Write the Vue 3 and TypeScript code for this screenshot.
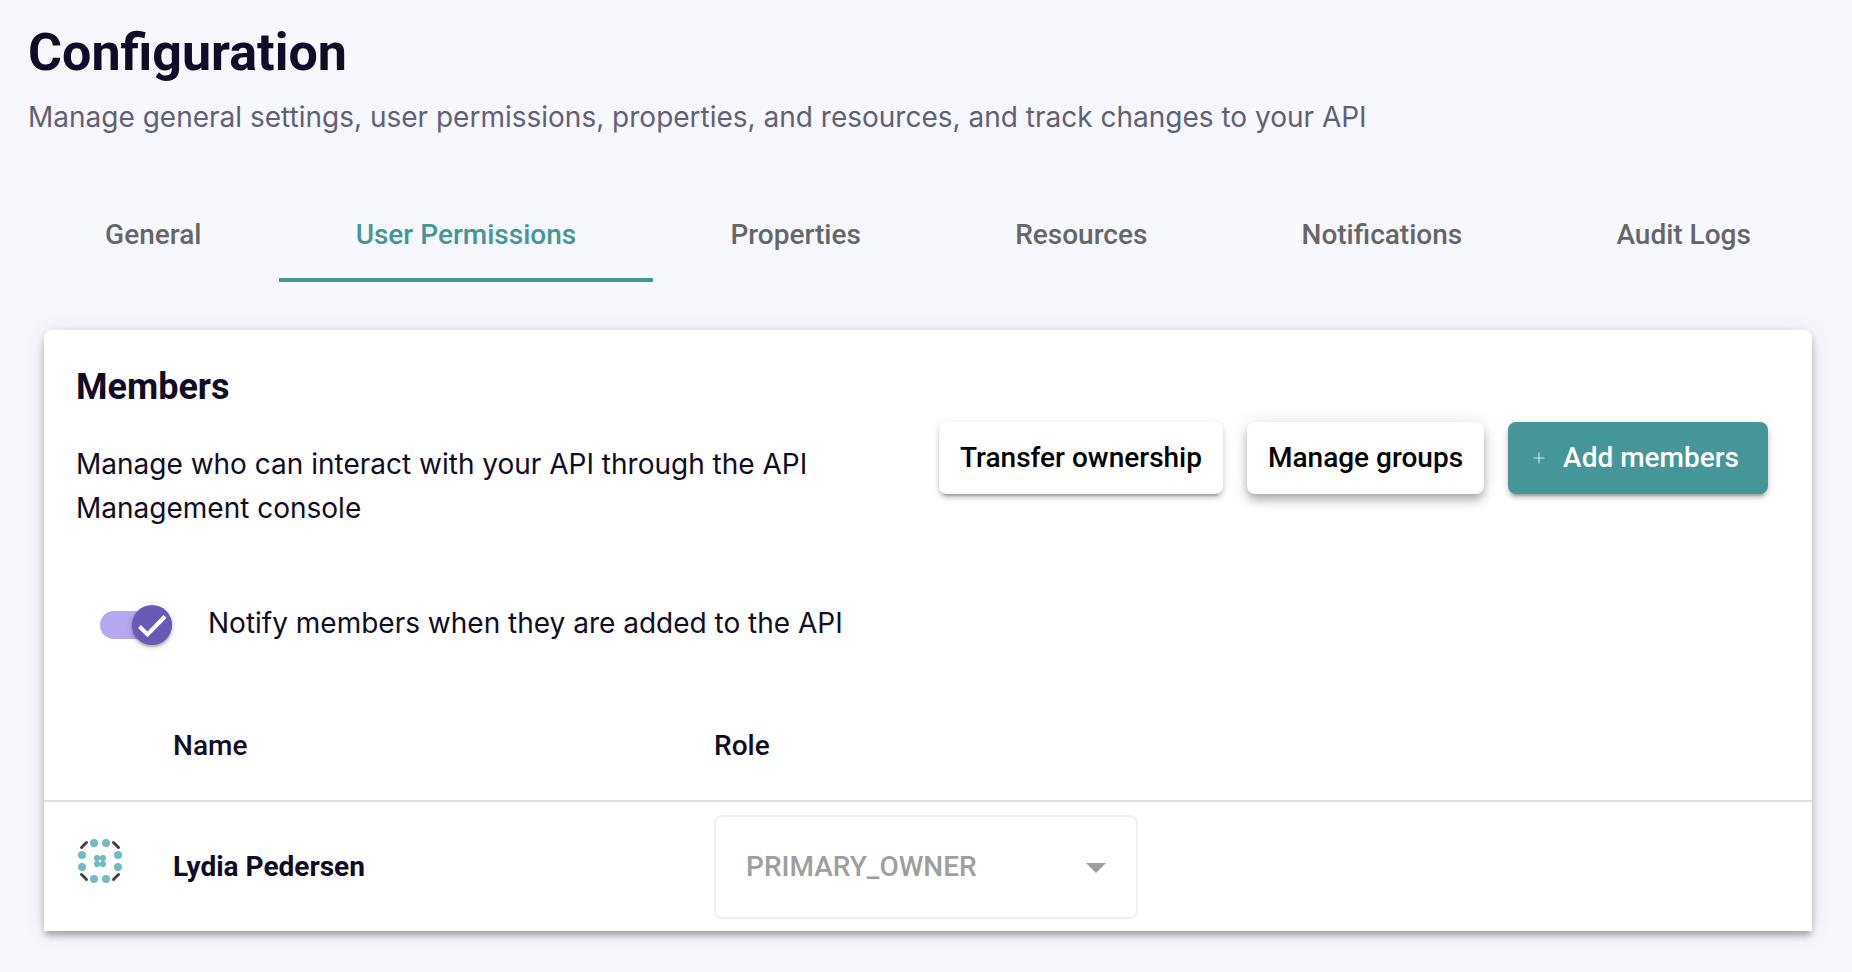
<script setup lang="ts">
import { ref } from 'vue'

interface Member {
  id: string
  name: string
  role: string
}

const tabs: string[] = [
  'General',
  'User Permissions',
  'Properties',
  'Resources',
  'Notifications',
  'Audit Logs',
]
const activeTab = ref('User Permissions')
const notifyMembers = ref(true)
const members = ref<Member[]>([
  { id: 'lydia', name: 'Lydia Pedersen', role: 'PRIMARY_OWNER' },
])

const avatarDots: [number, number][] = [
  [16, 4], [28, 4], [40, 16], [40, 28],
  [28, 40], [16, 40], [4, 28], [4, 16],
]
const avatarCentre: [number, number][] = [
  [19, 19], [25, 19], [19, 25], [25, 25],
]
</script>

<template>
  <main class="page">
    <header class="page-header">
      <h1 class="title">Configuration</h1>
      <p class="subtitle">
        Manage general settings, user permissions, properties, and resources, and track changes to your API
      </p>
    </header>

    <nav class="tabs" aria-label="Configuration sections">
      <a
        v-for="tab in tabs"
        :key="tab"
        href="#"
        class="tab"
        :class="{ active: tab === activeTab }"
        :aria-current="tab === activeTab ? 'page' : undefined"
        @click.prevent="activeTab = tab"
      >{{ tab }}</a>
    </nav>

    <section class="card">
      <div class="card-header">
        <div class="intro">
          <h2 class="card-title">Members</h2>
          <p class="description">
            Manage who can interact with your API through the API Management console
          </p>
        </div>
        <div class="actions">
          <button type="button" class="button">Transfer ownership</button>
          <button type="button" class="button raised">Manage groups</button>
          <button type="button" class="button primary">
            <svg class="plus" viewBox="0 0 12 12" aria-hidden="true">
              <path d="M6 0.5V11.5M0.5 6H11.5" />
            </svg>
            Add members
          </button>
        </div>
      </div>

      <div class="notify">
        <span class="switch">
          <input id="notify" v-model="notifyMembers" type="checkbox" role="switch" class="switch-input">
          <span class="thumb">
            <svg viewBox="0 0 40 40" aria-hidden="true">
              <path d="M7.5 21.5L15.5 29.5L33 11.5" />
            </svg>
          </span>
        </span>
        <label for="notify" class="notify-label">Notify members when they are added to the API</label>
      </div>

      <table class="members">
        <colgroup>
          <col class="col-avatar">
          <col class="col-name">
          <col>
        </colgroup>
        <thead>
          <tr>
            <td></td>
            <th scope="col">Name</th>
            <th scope="col">Role</th>
          </tr>
        </thead>
        <tbody>
          <tr v-for="member in members" :key="member.id">
            <td class="avatar-cell">
              <svg class="avatar" viewBox="0 0 44 44" aria-hidden="true">
                <path class="avatar-dash" d="M3.5 8.5L8.5 3.5M35.5 3.5L40.5 8.5M40.5 35.5L35.5 40.5M8.5 40.5L3.5 35.5" />
                <circle v-for="([x, y], i) in avatarDots" :key="'o' + i" :cx="x" :cy="y" r="4" />
                <circle v-for="([x, y], i) in avatarCentre" :key="'c' + i" :cx="x" :cy="y" r="3" />
                <path class="avatar-link" d="M19 19H25V25H19Z" />
              </svg>
            </td>
            <td class="name">{{ member.name }}</td>
            <td>
              <span class="select">
                <select v-model="member.role" disabled :aria-label="'Role of ' + member.name">
                  <option value="PRIMARY_OWNER">PRIMARY_OWNER</option>
                </select>
                <svg class="caret" viewBox="0 0 20 10" aria-hidden="true">
                  <path d="M0 0H20L10 10Z" />
                </svg>
              </span>
            </td>
          </tr>
        </tbody>
      </table>
    </section>
  </main>
</template>

<style>
body {
  margin: 0;
  background: #f7f8fd;
}
</style>

<style scoped>
.page {
  padding: 21px 24px 40px 28px;
  font-family: Roboto, "Liberation Sans", sans-serif;
  font-size: 28px;
  line-height: 44px;
  color: #100c27;
}

.title,
.subtitle,
.card-title,
.description {
  margin: 0;
}

.title {
  font-size: 52px;
  line-height: 64px;
  font-weight: 700;
}

.subtitle,
.description,
.notify-label {
  font-family: Inter, Roboto, sans-serif;
}

.subtitle {
  margin-top: 10px;
  color: #626075;
}

.tabs {
  display: flex;
  margin-top: 47px;
}

.tab {
  flex: 1 1 auto;
  box-sizing: border-box;
  height: 96px;
  border-bottom: 4px solid transparent;
  line-height: 97px;
  text-align: center;
  text-decoration: none;
  font-weight: 500;
  color: #666668;
}

.tab.active {
  color: #449698;
  border-bottom-color: #449698;
}

.card {
  margin: 48px 16px 0;
  padding-top: 35px;
  border-radius: 8px 8px 0 0;
  background: #fff;
  box-shadow:
    0 6px 6px -2px rgba(0, 0, 0, 0.2),
    0 4px 8px rgba(0, 0, 0, 0.14),
    0 2px 20px rgba(0, 0, 0, 0.12);
}

.card-header {
  display: flex;
  justify-content: space-between;
  align-items: center;
  gap: 48px;
  padding: 0 44px 0 32px;
}

.intro {
  flex: 0 1 780px;
}

.card-title {
  font-size: 36px;
  font-weight: 700;
}

.description {
  margin-top: 33px;
}

.actions {
  display: flex;
  flex-shrink: 0;
  gap: 24px;
  padding-top: 20px;
}

.button {
  display: flex;
  align-items: center;
  height: 72px;
  padding: 0 21px;
  border: 0;
  border-radius: 8px;
  background: #fff;
  color: #000;
  font: inherit;
  font-weight: 500;
  white-space: nowrap;
  box-shadow:
    0 6px 2px -4px rgba(0, 0, 0, 0.2),
    0 4px 4px rgba(0, 0, 0, 0.14),
    0 2px 10px rgba(0, 0, 0, 0.12);
}

.button.raised {
  box-shadow:
    0 4px 8px -2px rgba(0, 0, 0, 0.2),
    0 8px 10px rgba(0, 0, 0, 0.14),
    0 2px 20px rgba(0, 0, 0, 0.12);
}

.button.primary {
  gap: 18px;
  padding: 0 29px 0 25px;
  background: #449698;
  color: #fff;
}

.plus {
  width: 12px;
  height: 12px;
  fill: none;
  stroke: #d5e8e8;
  stroke-width: 1;
}

.notify {
  display: flex;
  align-items: center;
  gap: 36px;
  margin-top: 71px;
  padding-left: 56px;
}

.notify-label {
  padding-bottom: 4px;
}

.switch {
  position: relative;
  display: flex;
  align-items: center;
  width: 72px;
  height: 44px;
}

.switch-input {
  appearance: none;
  width: 72px;
  height: 28px;
  margin: 0;
  border-radius: 14px;
  background: #c4c4c8;
}

.switch-input:checked {
  background: #b5a8ee;
}

.thumb {
  position: absolute;
  left: 0;
  top: 2px;
  width: 40px;
  height: 40px;
  border-radius: 50%;
  background: #8a8a90;
  pointer-events: none;
  box-shadow:
    0 2px 2px rgba(0, 0, 0, 0.2),
    0 2px 6px rgba(0, 0, 0, 0.2);
}

.switch-input:checked + .thumb {
  left: auto;
  right: 0;
  background: #6a5ab5;
}

.thumb svg {
  display: block;
  fill: none;
  stroke: #fff;
  stroke-width: 4;
}

.members {
  width: 100%;
  margin-top: 39px;
  table-layout: fixed;
  border-collapse: collapse;
}

.col-avatar {
  width: 7.3%;
}

.col-name {
  width: 30.6%;
}

.members th,
.members td {
  padding: 0;
  text-align: left;
}

.members thead td,
.members th {
  box-sizing: border-box;
  height: 113px;
  padding-top: 4px;
  border-bottom: 2px solid #dfdfdf;
  font-weight: 500;
}

.members tbody td {
  height: 129px;
}

.members .avatar-cell {
  padding-left: 34px;
}

.avatar {
  display: block;
  width: 44px;
  height: 44px;
  margin-bottom: 12px;
  fill: #72bac5;
}

.avatar-dash {
  fill: none;
  stroke: #424242;
  stroke-width: 3;
  stroke-linecap: round;
}

.avatar-link {
  fill: none;
  stroke: #72bac5;
  stroke-width: 3;
}

.name {
  font-weight: 700;
}

.select {
  position: relative;
  display: block;
  width: 424px;
}

.select select {
  appearance: none;
  display: block;
  width: 100%;
  height: 104px;
  padding: 0 64px 0 30px;
  border: 2px solid #f0f0f0;
  border-radius: 8px;
  background: #fff;
  color: #9e9e9e;
  font: inherit;
  font-weight: 500;
  opacity: 1;
}

.caret {
  position: absolute;
  right: 32px;
  top: 48px;
  width: 20px;
  height: 10px;
  fill: #9e9e9e;
  pointer-events: none;
}
</style>
